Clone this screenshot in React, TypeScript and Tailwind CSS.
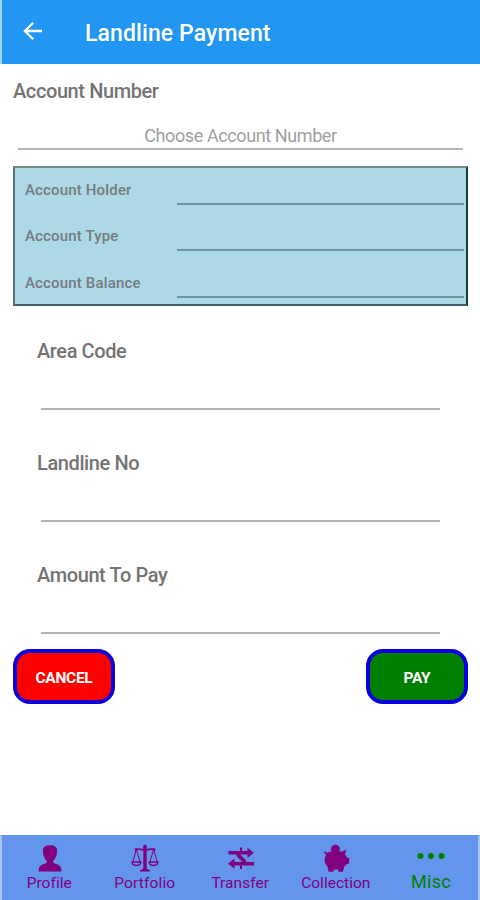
import React from 'react';

const accountRows = [
  { label: 'Account Holder', height: 'h-[37px]' },
  { label: 'Account Type', height: 'h-[46px]' },
  { label: 'Account Balance', height: 'h-[47px]' },
];

const fields = ['Area Code', 'Landline No', 'Amount To Pay'];

const BackIcon = () => (
  <svg className="w-5 h-5" viewBox="0 0 20 20" fill="none" stroke="white" strokeWidth="2.3">
    <path d="M19 10H2M10.200 1.700L1.900 10l8.300 8.300" />
  </svg>
);

const ProfileIcon = () => (
  <svg className="w-[26px] h-[28px]" viewBox="0 0 26 28" fill="#800080">
    <path d="M13 1.200C8.500 1.200 5.900 2.800 5.900 6.300c0 1.500.1 2.700.5 3.700-.4 1 .1 2.500 1.100 3.200.4 1.600 1.200 2.900 2.300 3.700v1.700c-.6 1-5.500 1.900-7 3.800-1 1.200-1.200 3-1.200 5.100h22.800c0-2.100-.2-3.900-1.200-5.100-1.500-1.900-6.400-2.800-7-3.800v-1.700c1.100-.8 1.900-2.100 2.300-3.700 1-.7 1.500-2.200 1.100-3.200.4-1 .5-2.200.5-3.700 0-3.500-2.600-5.100-7.100-5.100z" />
  </svg>
);

const PortfolioIcon = () => (
  <svg className="w-[28px] h-[28px]" viewBox="0 0 28 28" fill="none" stroke="#800080">
    <path d="M5 5.500c3.500-2 5.500 1.500 9 0 3.500 1.500 5.500-2 9 0" strokeWidth="1.600" />
    <path d="M14 3v22" strokeWidth="3.400" />
    <path d="M5.300 5.500L1.800 18M5.300 5.500l4 12.500M22.700 5.500l-4 12.500M22.700 5.500L26.200 18" strokeWidth="1" />
    <path d="M1.200 18h8.600c0 4.500-8.600 4.500-8.600 0zM18.200 18h8.600c0 4.500-8.600 4.500-8.600 0z" strokeWidth="1.500" />
    <path d="M12.200 24.500h3.600c.5 1 3.300 1 3.300 3H8.900c0-2 2.800-2 3.300-3z" fill="#800080" stroke="none" />
    <circle cx="14" cy="2.700" r="2" fill="#800080" stroke="none" />
    <circle cx="5.200" cy="5.500" r="1.500" fill="#800080" stroke="none" />
    <circle cx="22.800" cy="5.500" r="1.500" fill="#800080" stroke="none" />
  </svg>
);

const TransferIcon = () => (
  <svg className="w-[28px] h-[28px]" viewBox="0 0 28 28" fill="none" stroke="#800080">
    <path d="M1.500 8.800h20M6 19.700h21" strokeWidth="3.600" />
    <path d="M20.500 3.700l6.500 5.100-6.500 5.100zM7.500 14.600L1 19.700l6.500 5.100z" fill="#800080" stroke="none" />
    <path d="M14 3.500v4M14 20v5" strokeWidth="2" />
    <path d="M11.200 9.500c-1 4 6.800 4.800 6.300 9.500" strokeWidth="3.800" />
  </svg>
);

const CollectionIcon = () => (
  <svg className="w-[28px] h-[28px]" viewBox="0 0 28 28" fill="#800080">
    <circle cx="13.400" cy="5.300" r="4.500" />
    <path d="M8.200 7.500h10.700c1.400.4 2.600-.9 5.600-1.300l-1.600 4c.9 1 1.600 2.200 2.100 3.400l2.400.8-.4 5-2.700 1.200c-.6 1-1.300 1.800-2.200 2.500L21 27.700h-4.300l-1-2.200h-3.400l-1 2.200H6.700l-1.500-5.400c-1.600-1.600-2.600-3.800-2.600-6.300 0-2 .6-3.800 1.700-5.300L1.900 8.600l.7-1.300 3 1.600c.7-.6 1.600-1.100 2.600-1.400z" />
  </svg>
);

const tabs = [
  { name: 'Profile', icon: <ProfileIcon />, spacing: 'tracking-[0.05px]' },
  { name: 'Portfolio', icon: <PortfolioIcon />, spacing: 'tracking-[0.15px]' },
  { name: 'Transfer', icon: <TransferIcon />, spacing: 'tracking-[0.05px]' },
  { name: 'Collection', icon: <CollectionIcon />, spacing: 'tracking-[0.02px]' },
];

const App = () => {
  return (
    <div className="w-[480px] h-[900px] flex flex-col bg-white overflow-hidden font-['Roboto',sans-serif]">
      <header className="h-16 shrink-0 flex items-center bg-[#2196f3] border-l-2 border-[#a6d5fa] pl-[21px]">
        <div className="pb-[2px]">
          <BackIcon />
        </div>
        <h1 className="ml-[42px] mt-[3px] text-[23px] leading-7 font-medium text-white tracking-[0.1px]">Landline Payment</h1>
      </header>

      <main className="flex-1 flex flex-col px-[13px]">
        <h2 className="mt-[15px] h-6 text-[20px] leading-6 font-medium text-[#737373] tracking-[-0.4px]">Account Number</h2>
        <div className="mt-[19px] h-7 ml-[5px] mr-1 border-b-2 border-[#b5b5b5] text-center text-[18px] leading-[28px] text-[#a0a0a0] tracking-[-0.4px]">
          Choose Account Number
        </div>

        <section className="mt-4 w-[455px] h-[140px] bg-[#add8e6] border-2 border-t-[#738b87] border-l-[#557176] border-b-[#3e6164] border-r-[#123d3c] pl-[10px] pr-[2px]">
          {accountRows.map((row) => (
            <div key={row.label} className={`${row.height} flex items-end`}>
              <span className="w-[152px] h-[23px] text-[15px] leading-4 font-medium text-[#757b80] whitespace-nowrap tracking-[0.16px]">{row.label}</span>
              <span className="flex-1 border-b-2 border-[#73949f]" />
            </div>
          ))}
        </section>

        <section className="mt-[33px] px-6">
          {fields.map((field) => (
            <div key={field} className="h-28">
              <label className="block h-6 text-[20px] leading-6 font-medium text-[#737373] tracking-[-0.4px]">{field}</label>
              <div className="h-[47px] ml-1 mr-[3px] border-b-2 border-[#b5b5b5]" />
            </div>
          ))}
        </section>

        <div className="-mt-[26px] w-[455px] flex justify-between">
          <button className="w-[102px] h-[55px] pt-[4px] rounded-[17px] border-4 border-[#1200db] bg-[#ff0000] text-[15.5px] font-bold tracking-[-0.3px] text-white">CANCEL</button>
          <button className="w-[102px] h-[55px] pt-[4px] rounded-[17px] border-4 border-[#0500dc] bg-[#008000] text-[15.5px] font-bold tracking-[-0.3px] text-white">PAY</button>
        </div>
      </main>

      <nav className="h-[65px] shrink-0 flex bg-[#6495ed] border-x-2 border-x-[#a9c5f5] border-t border-t-[#6093da]">
        {tabs.map((tab) => (
          <div key={tab.name} className="w-[95.500px] flex flex-col items-center pt-2 text-[#800080]">
            {tab.icon}
            <span className={`-ml-px text-[15.500px] leading-[22px] ${tab.spacing}`}>{tab.name}</span>
          </div>
        ))}
        <div className="flex-1 flex flex-col items-center text-[#008000]">
          <svg className="mt-[17px] w-7 h-[6px]" viewBox="0 0 28 6" fill="#008000">
            <circle cx="3.500" cy="3" r="3" />
            <circle cx="14" cy="3" r="3" />
            <circle cx="24.500" cy="3" r="3" />
          </svg>
          <span className="mt-[12px] text-[18px] leading-[22px] tracking-[0.3px]">Misc</span>
        </div>
      </nav>
    </div>
  );
};

export default App;
